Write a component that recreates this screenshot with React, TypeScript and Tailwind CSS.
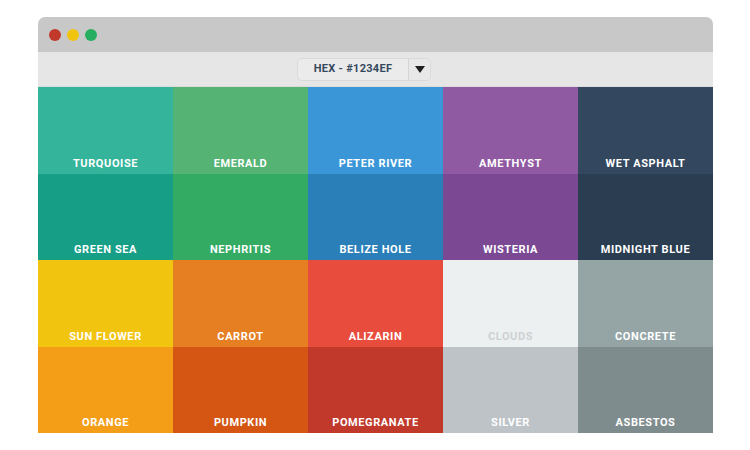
import React from "react";

const rows: { name: string; bg: string; text?: string }[][] = [
  [
    { name: "TURQUOISE", bg: "bg-[#34b49a]" },
    { name: "EMERALD", bg: "bg-[#55b474]" },
    { name: "PETER RIVER", bg: "bg-[#3b96d7]" },
    { name: "AMETHYST", bg: "bg-[#8f5aa1]" },
    { name: "WET ASPHALT", bg: "bg-[#33475e]" },
  ],
  [
    { name: "GREEN SEA", bg: "bg-[#169e86]" },
    { name: "NEPHRITIS", bg: "bg-[#33ab62]" },
    { name: "BELIZE HOLE", bg: "bg-[#2b7fb8]" },
    { name: "WISTERIA", bg: "bg-[#7b4894]" },
    { name: "MIDNIGHT BLUE", bg: "bg-[#2b3d50]" },
  ],
  [
    { name: "SUN FLOWER", bg: "bg-[#f1c40f]" },
    { name: "CARROT", bg: "bg-[#e67e22]" },
    { name: "ALIZARIN", bg: "bg-[#e74c3c]" },
    { name: "CLOUDS", bg: "bg-[#ecf0f1]", text: "text-[#cdd2d5]" },
    { name: "CONCRETE", bg: "bg-[#95a5a6]" },
  ],
  [
    { name: "ORANGE", bg: "bg-[#f49e18]" },
    { name: "PUMPKIN", bg: "bg-[#d45612]" },
    { name: "POMEGRANATE", bg: "bg-[#c0392b]" },
    { name: "SILVER", bg: "bg-[#bdc3c7]" },
    { name: "ASBESTOS", bg: "bg-[#7f8c8d]" },
  ],
];

export default function App() {
  return (
    <div className="w-[750px] h-[450px] bg-white pt-[17px] pl-[38px]" style={{ fontFamily: 'Roboto, "Liberation Sans", sans-serif' }}>
      <div className="w-[675px] rounded-t-[7px] overflow-hidden">
        <div className="h-[35px] bg-[#c8c8c8] flex items-center gap-[6px] pl-[11px]">
          <div className="w-[12px] h-[12px] rounded-full bg-[#c0392b]" />
          <div className="w-[12px] h-[12px] rounded-full bg-[#f1c40f]" />
          <div className="w-[12px] h-[12px] rounded-full bg-[#27ae60]" />
        </div>
        <div className="h-[35px] bg-[#e6e6e6] border-b border-[#dcdcdc] flex items-center justify-center">
          <div className="flex h-[23px] rounded-[5px] bg-[#ebebeb] border border-[#dadada] overflow-hidden mr-[23px]">
            <div className="w-[110px] flex items-center justify-center text-[11px] font-bold tracking-[0.3px] text-[#34495e]">HEX - #1234EF</div>
            <div className="w-[22px] border-l border-[#d4d4d4] flex items-center justify-center bg-[#e8e8e8]">
              <svg width="10" height="7" viewBox="0 0 10 7">
                <path d="M0 0 H10 L5 7 Z" fill="#1f1f1f" />
              </svg>
            </div>
          </div>
        </div>
        <div className="grid grid-cols-5">
          {rows.flat().map((c) => (
            <div key={c.name} className={`${c.bg} h-[86.5px] flex items-end justify-center`}>
              <span className={`text-[11px] font-bold tracking-[0.6px] leading-[20px] ${c.text ?? "text-white"}`}>{c.name}</span>
            </div>
          ))}
        </div>
      </div>
    </div>
  );
}
